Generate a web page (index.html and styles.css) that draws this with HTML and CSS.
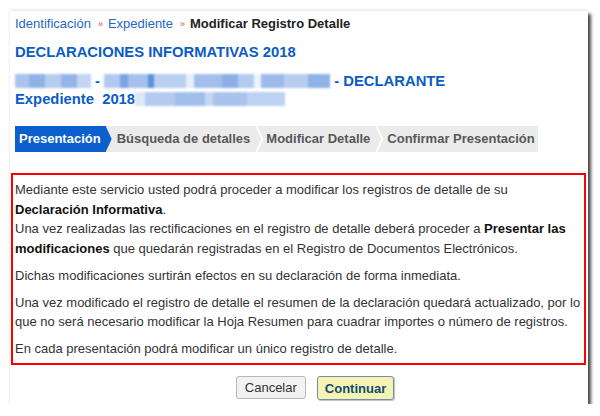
FILE: index.html
```html
<!DOCTYPE html>
<html lang="es">
<head>
  <meta charset="UTF-8" />
  <title>Modificar Registro Detalle</title>
  <meta name="viewport" content="width=device-width, initial-scale=1.0" />
  <link rel="stylesheet" href="styles.css">
</head>
<body>

<div class="card">
  <div class="crumbs">
    <a href="#">Identificación</a><span class="sep">»</span><a href="#">Expediente</a><span class="sep">»</span><strong>Modificar Registro Detalle</strong>
  </div>

  <h1 class="title">DECLARACIONES INFORMATIVAS 2018</h1>

  <div class="subject">
    <div><span class="blur b1"></span> - <span class="blur b2"></span> - DECLARANTE</div>
    <div>Expediente&nbsp; 2018<span class="blur b3"></span></div>
  </div>

  <div class="steps">
    <div class="step active">Presentación</div>
    <div class="step">Búsqueda de detalles</div>
    <div class="step">Modificar Detalle</div>
    <div class="step last">Confirmar Presentación</div>
  </div>

  <div class="notice">
    <p>Mediante este servicio usted podrá proceder a modificar los registros de detalle de su <strong>Declaración Informativa</strong>.<br>
    Una vez realizadas las rectificaciones en el registro de detalle deberá proceder a <strong>Presentar las</strong> <strong>modificaciones</strong> que quedarán registradas en el Registro de Documentos Electrónicos.</p>
    <p>Dichas modificaciones surtirán efectos en su declaración de forma inmediata.</p>
    <p>Una vez modificado el registro de detalle el resumen de la declaración quedará actualizado, por lo que no será necesario modificar la Hoja Resumen para cuadrar importes o número de registros.</p>
    <p>En cada presentación podrá modificar un único registro de detalle.</p>
  </div>

  <div class="actions">
    <button class="btn">Cancelar</button>
    <button class="btn primary">Continuar</button>
  </div>
</div>

</body>
</html>
```

FILE: styles.css
```css
body {
  margin: 0;
  background: #fff;
  font-family: "Liberation Sans", Arial, sans-serif;
  font-size: 13px;
  color: #333;
}

.card {
  width: 578px;
  margin: 11px 0 0 10px;
  padding: 4px 0 4px 0;
  background: #fff;
  box-shadow: 3px 3px 3px rgba(0, 0, 0, 0.7), 0 -1px 3px rgba(0, 0, 0, 0.1);
}

.crumbs {
  margin-left: 5px;
  line-height: 18px;
}

.crumbs a {
  color: #2466c9;
  text-decoration: none;
}

.crumbs strong {
  color: #222;
}

.crumbs .sep {
  color: #e03a3a;
  font-size: 9px;
  margin: 0 5px 0 7px;
  vertical-align: 1px;
}

.title {
  margin: 10px 0 0 5px;
  font-size: 14.8px;
  line-height: 18px;
  font-weight: bold;
  color: #0b5cc6;
}

.subject {
  margin: 11px 0 0 5px;
  font-size: 14.8px;
  line-height: 18px;
  font-weight: bold;
  color: #0b5cc6;
}

.blur {
  display: inline-block;
  height: 14px;
  vertical-align: -2px;
  filter: blur(0.8px);
}

.b1 {
  width: 76px;
  background: linear-gradient(90deg, #a9c3ec 0, #a9c3ec 14px, #8fb2e6 14px, #8fb2e6 30px, #b7cdf0 30px, #b7cdf0 46px, #94b5e8 46px, #94b5e8 62px, #c3d5f3 62px);
}

.b2 {
  width: 226px;
  background: linear-gradient(90deg, #b3caef 0, #b3caef 16px, #7aa3e2 16px, #7aa3e2 24px, #a6c1ed 24px, #a6c1ed 44px, #5d8fdc 44px, #5d8fdc 50px, #b9cff1 50px, #b9cff1 82px, #e8f0fb 82px, #e8f0fb 90px, #a3bfec 90px, #a3bfec 118px, #8cb0e6 118px, #8cb0e6 134px, #b4cbf0 134px, #b4cbf0 150px, #eef3fc 150px, #eef3fc 157px, #9dbaeb 157px, #9dbaeb 180px, #b7cdf0 180px, #b7cdf0 204px, #8fb2e7 204px);
}

.b3 {
  width: 150px;
  background: linear-gradient(90deg, #dce7f8 0, #dce7f8 10px, #b4cbf0 10px, #b4cbf0 40px, #a2bfec 40px, #a2bfec 70px, #c6d7f4 70px, #c6d7f4 78px, #a9c3ed 78px, #a9c3ed 112px, #bdd1f2 112px);
}

.steps {
  display: inline-flex;
  margin: 18px 0 0 5px;
  background: #ebebeb;
  height: 26px;
  line-height: 26px;
  font-weight: bold;
  color: #585858;
}

.step {
  position: relative;
  padding: 0 6px 0 10px;
}

.step.last {
  padding: 0 3px 0 11px;
}

.step + .step::before {
  content: "";
  position: absolute;
  left: -1px;
  top: 0;
  width: 8px;
  height: 100%;
  background: #fff;
  clip-path: polygon(0 0, 2px 0, 8px 50%, 2px 100%, 0 100%, 6px 50%);
}

.step.active {
  padding: 0 5px 0 4px;
  background: #0c5fcc;
  color: #fff;
  z-index: 1;
}

.step.active::after {
  content: "";
  position: absolute;
  right: -6px;
  top: 0;
  width: 6px;
  height: 100%;
  background: #0c5fcc;
  clip-path: polygon(0 0, 100% 50%, 0 100%);
}

.step.active + .step {
  padding-left: 11px;
}

.step.active + .step::before {
  display: none;
}

.notice {
  margin: 21px 2px 0 1px;
  border: 2px solid #f00;
  padding: 5px 3px 4.5px 2px;
  line-height: 19.5px;
}

.notice p {
  margin: 0 0 7.5px;
}

.notice p:last-child {
  margin-bottom: 0;
}

.notice strong {
  color: #111;
}

.actions {
  display: flex;
  justify-content: center;
  gap: 11px;
  margin-top: 11px;
  padding-left: 32px;
}

.btn {
  height: 23px;
  padding: 0 8px;
  font-family: "Liberation Sans", Arial, sans-serif;
  font-size: 13px;
  color: #333;
  background: #f2f2f2;
  border: 1px solid #b8b8b8;
  border-radius: 3px;
}

.btn.primary {
  height: 24px;
  padding: 0 7px;
  font-weight: bold;
  color: #0d4d72;
  background: #f6f3b2;
  border: 1px solid #6b8fae;
  box-shadow: 1px 1px 1px rgba(0, 0, 0, 0.25);
}
```
